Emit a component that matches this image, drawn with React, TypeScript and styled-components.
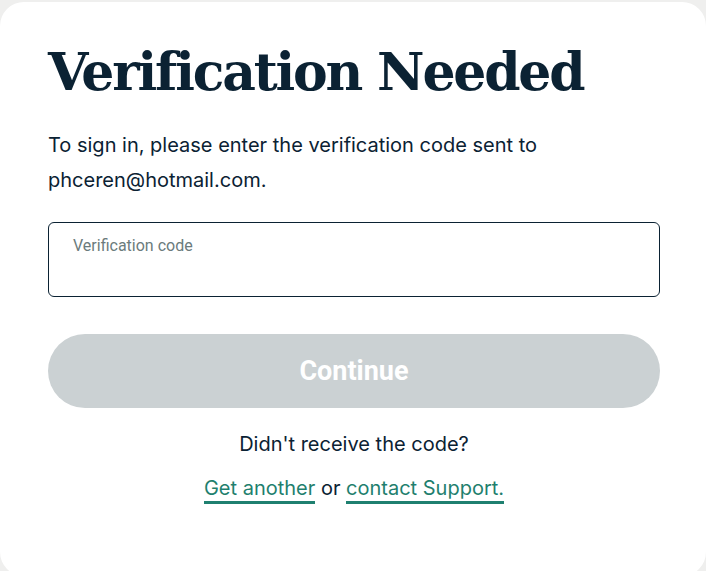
import React from "react";
import styled, { createGlobalStyle } from "styled-components";

const GlobalStyle = createGlobalStyle`
  html, body {
    margin: 0;
    padding: 0;
    background: #efefee;
  }
  body {
    font-family: Inter, "Noto Sans", sans-serif;
    color: #0b2233;
  }
`;

const Page = styled.div`
  width: 706px;
  height: 571px;
  overflow: hidden;
  padding-top: 2px;
  box-sizing: border-box;
`;

const Card = styled.main`
  background: #ffffff;
  border-radius: 24px;
  height: 574px;
  box-sizing: border-box;
  padding: 38px 46px 0 48px;
  display: flex;
  flex-direction: column;
`;

const Title = styled.h1`
  margin: 0;
  font-family: "DejaVu Serif", "Liberation Serif", serif;
  font-weight: 700;
  font-size: 52px;
  line-height: 64px;
  letter-spacing: -2.2px;
  color: #0b2233;
`;

const Intro = styled.p`
  margin: 24px 0 0;
  font-size: 20px;
  line-height: 35px;
  color: #0b2233;
`;

const Field = styled.label`
  margin-top: 24px;
  height: 75px;
  border: 1px solid #0b2233;
  border-radius: 6px;
  box-sizing: border-box;
  padding: 13px 24px 0;
  display: flex;
  flex-direction: column;
`;

const FieldLabel = styled.span`
  font-family: Roboto, "Liberation Sans", sans-serif;
  font-size: 16px;
  line-height: 20px;
  color: #6b7b7c;
`;

const FieldInput = styled.input`
  border: none;
  outline: none;
  padding: 0;
  margin-top: 6px;
  font-family: Inter, sans-serif;
  font-size: 18px;
  background: transparent;
  color: #0b2233;
`;

const ContinueButton = styled.button`
  margin-top: 37px;
  height: 74px;
  border: none;
  border-radius: 37px;
  background: #cbd1d3;
  color: #ffffff;
  font-family: Roboto, "Liberation Sans", sans-serif;
  font-weight: 700;
  font-size: 27px;
  cursor: default;
`;

const Help = styled.div`
  margin-top: 19px;
  display: flex;
  flex-direction: column;
  align-items: center;
  gap: 10px;
  font-size: 20px;
  line-height: 34px;
`;

const Links = styled.div`
  color: #0b2233;
`;

const Link = styled.a`
  color: #1f7f6e;
  text-decoration: none;
  border-bottom: 3px solid #1f8070;
  padding-bottom: 1px;
`;

export default function App() {
  return (
    <>
      <GlobalStyle />
      <Page>
        <Card>
          <Title>Verification Needed</Title>
          <Intro>
            To sign in, please enter the verification code sent to
            <br />
            phceren@hotmail.com.
          </Intro>
          <Field>
            <FieldLabel>Verification code</FieldLabel>
            <FieldInput type="text" />
          </Field>
          <ContinueButton disabled>Continue</ContinueButton>
          <Help>
            <div>Didn't receive the code?</div>
            <Links>
              <Link href="#">Get another</Link> or{" "}
              <Link href="#">contact Support.</Link>
            </Links>
          </Help>
        </Card>
      </Page>
    </>
  );
}
